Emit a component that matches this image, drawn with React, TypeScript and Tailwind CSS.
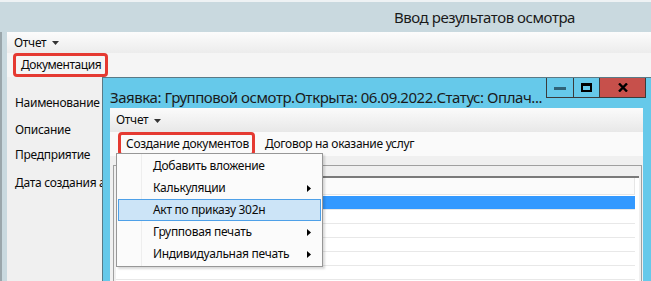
import React from "react"

const font = { fontFamily: '"Noto Sans", "Open Sans", sans-serif' }

function DownArrow() {
  return (
    <svg width="7" height="4" viewBox="0 0 7 4" className="ml-[6px] mt-[1px]">
      <path d="M0 0h7L3.5 4z" fill="#333" />
    </svg>
  )
}

function RightArrow() {
  return (
    <svg width="4" height="7" viewBox="0 0 4 7">
      <path d="M0 0l4 3.5L0 7z" fill="#000" />
    </svg>
  )
}

const menuItems = [
  { label: "Добавить вложение", sub: false },
  { label: "Калькуляции", sub: true },
  { label: "Акт по приказу 302н", sub: false, active: true },
  { label: "Групповая печать", sub: true },
  { label: "Индивидуальная печать", sub: true },
]

function DropMenu() {
  return (
    <div className="absolute left-[116px] top-[153px] w-[207px] h-[114px] bg-[#fbfbfb] border border-[#979797] shadow-[2px_2px_2px_rgba(0,0,0,0.15)] pt-[1px] px-[1px]">
      <div className="absolute left-[24px] top-0 bottom-0 w-px bg-[#eeeeee]" />
      {menuItems.map((it) => (
        <div
          key={it.label}
          className={
            "relative h-[22px] flex items-center pl-[34px] pr-[9px] text-[12px] tracking-[-0.3px] text-[#0a0a0a] whitespace-nowrap " +
            (it.active ? "bg-[#cce4f7] border border-[#4ea0e8]" : "border border-transparent")
          }
        >
          <span className="flex-1">{it.label}</span>
          {it.sub && <RightArrow />}
        </div>
      ))}
    </div>
  )
}

function GridRows() {
  const rows = [0, 1, 2, 3, 4, 5, 6]
  return (
    <div className="mt-[9px] ml-[3px] mr-px h-[120px] border-t border-l border-r border-[#a0a0a0] bg-[#f0f0f0] pt-[10px] pl-[2px] pr-[2px]">
      <div className="h-full border-t-2 border-[#7a7a7a] bg-white">
        <div className="h-[17px] border-b border-[#e6e6e6] bg-[#fbfbfb] mr-[4px] border-r" />
        {rows.map((r) => (
          <div key={r} className="h-[14px] border-b border-[#e8e8e8] mr-[4px]">
            {r === 0 && <div className="h-[13px] mt-px bg-[#3399ff]" />}
          </div>
        ))}
      </div>
    </div>
  )
}

function ChildWindow() {
  return (
    <div className="absolute left-[102px] top-[77px] w-[549px] h-[210px] border-l border-t border-[#5a7a86] bg-[#66c9ea] flex flex-col">
      {/* title bar */}
      <div className="h-[30px] flex shrink-0">
        <div className="flex-1 flex items-end pl-[7px] pb-[1px] text-[15px] tracking-[-0.45px] text-[#1a1a1a] leading-[20px] whitespace-nowrap overflow-hidden">
          Заявка: Групповой осмотр.Открыта: 06.09.2022.Статус: Оплач...
        </div>
        <div className="flex h-[20px] mr-[5px] border border-[#3b3b3b] border-t-0">
          <div className="w-[27px] border-r border-[#3b3b3b] flex items-center justify-center">
            <div className="w-[12px] h-[3px] bg-[#2f6378] mt-[1px]" />
          </div>
          <div className="w-[26px] border-r border-[#3b3b3b] flex items-center justify-center">
            <div className="w-[11px] h-[9px] border-2 border-t-[3px] border-black" />
          </div>
          <div className="w-[45px] bg-[#c7504b] flex items-center justify-center">
            <svg width="10" height="9" viewBox="0 0 10 9">
              <path d="M1 0.5L9 8.5M9 0.5L1 8.5" stroke="#000" strokeWidth="2.4" />
            </svg>
          </div>
        </div>
      </div>
      {/* client */}
      <div className="flex-1 ml-[7px] mr-[8px] bg-[#f0f0f0] relative tracking-[-0.3px]" style={font}>
        <div className="h-[24px] bg-gradient-to-b from-[#fbfbfb] to-[#e8e8e8] flex items-center pl-[6px] text-[12px] text-[#0a0a0a]">
          Отчет
          <DownArrow />
        </div>
        <div className="h-[24px] bg-[#fafafa] flex items-center text-[12px] text-[#0a0a0a] whitespace-nowrap">
          <div className="ml-[8px] h-[24px] w-[137px] border-[3px] border-[#e53a32] rounded-[4px] flex items-center pl-[5px]">
            Создание документов
          </div>
          <div className="ml-[10px]">Договор на оказание услуг</div>
        </div>
        <GridRows />
      </div>
    </div>
  )
}

export default function App() {
  return (
    <div className="w-[651px] h-[281px] overflow-hidden relative bg-[#c9d9df]" style={font}>
      <div className="h-[2px] bg-[#eef2f4]" />
      <div className="h-[30px] flex items-center pl-[394px] text-[15px] tracking-[-0.45px] text-[#1a1a1a]">
        Ввод результатов осмотра
      </div>
      <div className="flex h-[249px]">
        <div className="w-[7px] border-l-2 border-[#9aa6ab]" />
        <div className="flex-1 flex flex-col bg-[#f0f0f0] tracking-[-0.3px]">
          <div className="h-[21px] bg-gradient-to-b from-[#fcfcfc] to-[#ececec] flex items-center pl-[7px] text-[12px] text-[#0a0a0a]">
            Отчет
            <DownArrow />
          </div>
          <div className="h-[24px] bg-[#f5f5f5] flex items-center">
            <div className="ml-[6px] h-[24px] w-[95px] border-[3px] border-[#e53a32] rounded-[4px] flex items-center pl-[5px] text-[12px] tracking-[-0.45px] text-[#0a0a0a] whitespace-nowrap">
              Документация
            </div>
          </div>
          <div className="flex-1 flex flex-col pl-[8px] text-[12px] text-[#0a0a0a] whitespace-nowrap">
            <div className="mt-[17px] h-[18px]">Наименование</div>
            <div className="mt-[9px] h-[18px]">Описание</div>
            <div className="mt-[7px] h-[18px]">Предприятие</div>
            <div className="mt-[10px] h-[18px]">Дата создания а</div>
          </div>
        </div>
      </div>
      <ChildWindow />
      <DropMenu />
    </div>
  )
}
